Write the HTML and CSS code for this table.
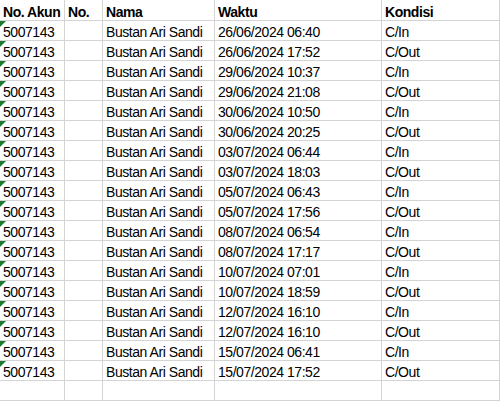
FILE: index.html
```html
<!DOCTYPE html>
<html>
<head>
<meta charset="utf-8">
<link rel="stylesheet" href="styles.css">
</head>
<body>
<div class="sheet">
  <div class="c h">No. Akun</div><div class="c h">No.</div><div class="c h">Nama</div><div class="c h">Waktu</div><div class="c h">Kondisi</div>
  <div class="c t">5007143</div><div class="c"></div><div class="c">Bustan Ari Sandi</div><div class="c">26/06/2024 06:40</div><div class="c">C/In</div>
  <div class="c t">5007143</div><div class="c"></div><div class="c">Bustan Ari Sandi</div><div class="c">26/06/2024 17:52</div><div class="c">C/Out</div>
  <div class="c t">5007143</div><div class="c"></div><div class="c">Bustan Ari Sandi</div><div class="c">29/06/2024 10:37</div><div class="c">C/In</div>
  <div class="c t">5007143</div><div class="c"></div><div class="c">Bustan Ari Sandi</div><div class="c">29/06/2024 21:08</div><div class="c">C/Out</div>
  <div class="c t">5007143</div><div class="c"></div><div class="c">Bustan Ari Sandi</div><div class="c">30/06/2024 10:50</div><div class="c">C/In</div>
  <div class="c t">5007143</div><div class="c"></div><div class="c">Bustan Ari Sandi</div><div class="c">30/06/2024 20:25</div><div class="c">C/Out</div>
  <div class="c t">5007143</div><div class="c"></div><div class="c">Bustan Ari Sandi</div><div class="c">03/07/2024 06:44</div><div class="c">C/In</div>
  <div class="c t">5007143</div><div class="c"></div><div class="c">Bustan Ari Sandi</div><div class="c">03/07/2024 18:03</div><div class="c">C/Out</div>
  <div class="c t">5007143</div><div class="c"></div><div class="c">Bustan Ari Sandi</div><div class="c">05/07/2024 06:43</div><div class="c">C/In</div>
  <div class="c t">5007143</div><div class="c"></div><div class="c">Bustan Ari Sandi</div><div class="c">05/07/2024 17:56</div><div class="c">C/Out</div>
  <div class="c t">5007143</div><div class="c"></div><div class="c">Bustan Ari Sandi</div><div class="c">08/07/2024 06:54</div><div class="c">C/In</div>
  <div class="c t">5007143</div><div class="c"></div><div class="c">Bustan Ari Sandi</div><div class="c">08/07/2024 17:17</div><div class="c">C/Out</div>
  <div class="c t">5007143</div><div class="c"></div><div class="c">Bustan Ari Sandi</div><div class="c">10/07/2024 07:01</div><div class="c">C/In</div>
  <div class="c t">5007143</div><div class="c"></div><div class="c">Bustan Ari Sandi</div><div class="c">10/07/2024 18:59</div><div class="c">C/Out</div>
  <div class="c t">5007143</div><div class="c"></div><div class="c">Bustan Ari Sandi</div><div class="c">12/07/2024 16:10</div><div class="c">C/In</div>
  <div class="c t">5007143</div><div class="c"></div><div class="c">Bustan Ari Sandi</div><div class="c">12/07/2024 16:10</div><div class="c">C/Out</div>
  <div class="c t">5007143</div><div class="c"></div><div class="c">Bustan Ari Sandi</div><div class="c">15/07/2024 06:41</div><div class="c">C/In</div>
  <div class="c t">5007143</div><div class="c"></div><div class="c">Bustan Ari Sandi</div><div class="c">15/07/2024 17:52</div><div class="c">C/Out</div>
  <div class="c"></div><div class="c"></div><div class="c"></div><div class="c"></div><div class="c"></div>
</div>
</body>
</html>
```
FILE: styles.css
```css
html, body {
  margin: 0;
  padding: 0;
  background: #ffffff;
}
.sheet {
  display: grid;
  grid-template-columns: 65px 38px 112px 167px 118px;
  grid-template-rows: 21px repeat(19, 20px);
  font-family: "Liberation Sans", Arial, sans-serif;
  font-size: 14px;
  letter-spacing: -0.45px;
  color: #000;
}
.c {
  position: relative;
  box-sizing: border-box;
  border-right: 1px solid #d4d4d4;
  border-bottom: 1px solid #d4d4d4;
  padding: 1.5px 0 0 3px;
  line-height: 19px;
  white-space: nowrap;
  overflow: hidden;
}
.h {
  font-weight: bold;
  padding-top: 2.5px;
}
.t::before {
  content: "";
  position: absolute;
  left: 0;
  top: 0;
  width: 6px;
  height: 6px;
  background: #1e7a2e;
  clip-path: polygon(0 0, 100% 0, 0 100%);
}
```
